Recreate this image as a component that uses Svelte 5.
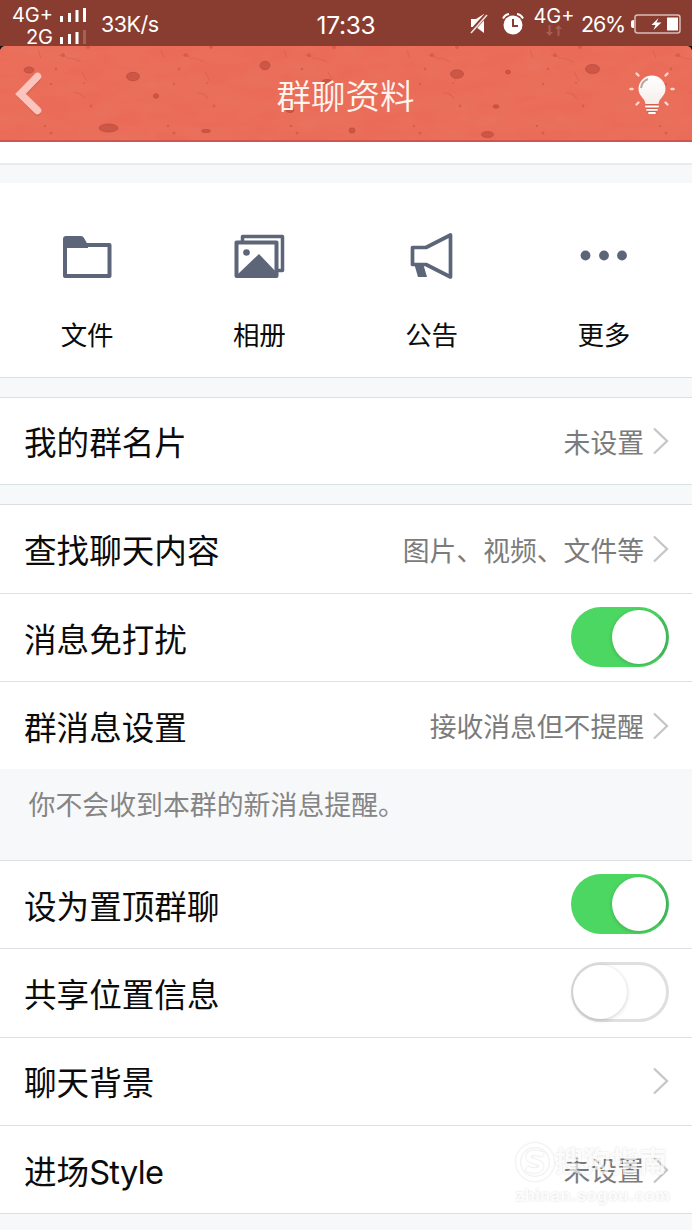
<script>
  const actions = [
    { id: 'files', label: '文件' },
    { id: 'album', label: '相册' },
    { id: 'notice', label: '公告' },
    { id: 'more', label: '更多' }
  ];
  const search = [
    { label: '查找聊天内容', value: '图片、视频、文件等' },
    { label: '消息免打扰', toggle: true, on: true },
    { label: '群消息设置', value: '接收消息但不提醒' }
  ];
  const settings = [
    { label: '设为置顶群聊', toggle: true, on: true },
    { label: '共享位置信息', toggle: true, on: false },
    { label: '聊天背景', value: '' },
    { label: '进场', latin: 'Style', value: '未设置' }
  ];
  // Pits on the header's stone surface: centre x, centre y, radii
  const pits = [
    [29, 24, 5, 3], [133, 30.5, 6.5, 4.2], [156, 50, 2.6, 2.2], [108.5, 82, 9.5, 4],
    [206, 85, 4.500, 1.600], [265, 19.5, 5, 4.2], [327, 36, 5, 2.5], [290, 64, 4, 2.5],
    [352, 84.5, 3, 2.6], [457, 28, 6.5, 4.2], [508, 26, 2.500, 1.800], [496, 60.5, 3, 1.700],
    [487.5, 88.5, 6, 3], [592.5, 23, 7, 4.5]
  ];
</script>

{#snippet chevron()}
  <svg class="chevron" width="18" height="28" viewBox="0 0 18 28"><path d="M2 1.5 15 14 2 26.5" fill="none" stroke="#c6c6ca" stroke-width="2.3" /></svg>
{/snippet}

{#snippet row(item)}
  <div class="row">
    <span class="label">{item.label}{#if item.latin}<span class="latin">{item.latin}</span>{/if}</span>
    {#if item.toggle}
      <span class="switch" class:on={item.on}><i></i></span>
    {:else}
      <span class="value">{item.value}</span>
      {@render chevron()}
    {/if}
  </div>
{/snippet}

<div class="screen">
  <div class="status">
    <div class="left">
      <div class="networks">
        <div class="net"><span>4G+</span><svg width="28" height="16" viewBox="0 0 28 16" fill="#fff"><path d="M1 9h3v6H1zM9 6h3v9H9zM16.500 3h3v12h-3zM24 1h3v14h-3z" /></svg></div>
        <div class="net"><span>2G</span><svg width="28" height="16" viewBox="0 0 28 16" fill="#fff"><path d="M1 8h3v7H1zM9 5h3v10H9zM16.500 3h3v12h-3z" /><path d="M24 1h3v14h-3z" opacity=".2" /></svg></div>
      </div>
      <span class="speed">33K/s</span>
    </div>
    <span class="clock">17:33</span>
    <div class="right">
      <svg class="mute" width="18" height="22" viewBox="0 0 18 22"><path d="M1 6h5l8-5v19l-8-6H1z" fill="#fff" /><path d="M-1 21 17 1" stroke="#893d30" stroke-width="4" /><path d="M1 20 17 2" stroke="#eee0dd" stroke-width="1.6" /></svg>
      <svg class="alarm" width="22" height="22" viewBox="0 0 22 22"><circle cx="11" cy="12" r="9.500" fill="#fff" /><path d="M1 5.500Q3 1.500 7 1M15 1q4 .5 6 4.500" fill="none" stroke="#fff" stroke-width="2" /><path d="M11 6v7h5" fill="none" stroke="#893d30" stroke-width="2" /></svg>
      <div class="data"><span>4G+</span><svg width="16" height="12" viewBox="0 0 16 12" fill="#a35d52"><path d="M2.500 0h2v7H7l-3.500 4L0 7h2.500zM11.500 11h2V4H16l-3.500-4L9 4h2.500z" /></svg></div>
      <span class="percent">26%</span>
      <svg width="51" height="20" viewBox="0 0 51 20"><path d="M4 6Q1 6 1 8v4q0 2 3 2z" fill="#fff" /><rect x="5" y="1" width="45" height="18" rx="2.500" fill="none" stroke="#d7bdb8" stroke-width="1.500" /><path d="m28.500 4-7 7h4l-2 5 8-7.500h-5z" fill="#fff" /><path d="M37 3.500h11v13H37z" fill="#fff" /></svg>
    </div>
  </div>

  <header>
    <svg class="stone" viewBox="0 0 692 96" preserveAspectRatio="none">
      <defs>
        <pattern id="grain" width="123" height="96" patternUnits="userSpaceOnUse">
          <path d="M59 9q5 2 8 1m-1 2q9 0 15 4M74 47q7-1 11 6M82 26l5 9M38 4l3 8" fill="none" stroke="#ce5548" stroke-width="1.200" opacity=".4" />
          <g fill="#c94e42" opacity=".55"><circle cx="63" cy="9" r="2" /><circle cx="56" cy="23" r="1.400" /><circle cx="51" cy="38" r="1.300" /><circle cx="91" cy="60" r="1.400" /><circle cx="45" cy="80" r="1.300" /><circle cx="51" cy="87" r="1.500" /><circle cx="88" cy="1" r="2" /><circle cx="84" cy="37" r="1" /></g>
        </pattern>
        <filter id="rough" x="0" y="0" width="100%" height="100%"><feTurbulence type="fractalNoise" baseFrequency=".025 .06" numOctaves="3" seed="8" /><feColorMatrix values="0 0 0 0 .78 0 0 0 0 .3 0 0 0 0 .22 .25 0 0 0 -.06" /></filter>
      </defs>
      <rect width="692" height="96" fill="#ea6b57" />
      <rect width="692" height="96" filter="url(#rough)" />
      <rect width="692" height="96" fill="url(#grain)" />
      {#each pits as [x, y, rx, ry]}
        <ellipse cx={x} cy={y} {rx} {ry} fill="#c95343" stroke="#b94639" stroke-width=".8" opacity=".85" />
      {/each}
      <path d="M0 95h692" stroke="#cd5650" stroke-width="2" />
      <path d="M0 0h4Q1 1 0 4zM692 0h-4q3 1 4 4z" fill="#16100f" />
    </svg>
    <svg class="back" width="32" height="48" viewBox="0 0 32 48"><path d="M25.500 7 9 24l16.500 17" transform="translate(0 2)" fill="none" stroke="#b65144" stroke-width="6.500" stroke-linecap="round" opacity=".3" /><path d="M25.500 6.500 8.500 24l17 16.500" fill="none" stroke="#fbc4bc" stroke-width="7.500" stroke-linecap="round" stroke-linejoin="miter" /></svg>
    <h1>群聊资料</h1>
    <svg class="bulb" width="48" height="48" viewBox="0 0 48 48"><defs><linearGradient id="glass" x2="0" y2="1"><stop stop-color="#fff" /><stop offset="1" stop-color="#f5eeeb" /></linearGradient></defs><path d="M19 34h12v4l-2 6H21l-2-6z" fill="#b64f43" opacity=".5" /><path d="M25 5.500c-7.500 0-13.500 6-13.500 13.500 0 7 6.500 9 7 15h13c.5-6 7-8 7-15 0-7.500-6-13.500-13.500-13.500z" fill="url(#glass)" /><path d="M14 18q1-7 7-9" fill="none" stroke="#bda6a0" stroke-width="2" /><path d="M19 36.500h12M20 39.800h10M22 43h6" stroke="#fff" stroke-width="1.800" stroke-linecap="round" /><path d="m9.500 3.500 2 2M40.500 3.500l-2 2M3.500 19h2M44.500 19h2M9.500 34.500l2-2M40.500 34.500l-2-2" stroke="#ffd9d0" stroke-width="2.400" stroke-linecap="round" /></svg>
  </header>

  <div class="tail"></div>
  <div class="gap first"></div>

  <nav>
    {#each actions as a}
      <div class="action">
        <svg width="56" height="56" viewBox="0 0 56 56" fill="none" stroke="#5d6579" stroke-width="4" stroke-linejoin="round">
          {#if a.id === 'files'}
            <path d="M6 15h44.500v31H6z" /><path d="M4 18v-9q0-3 3-3h15q2 0 3 2l4 7v3z" fill="#5d6579" stroke="none" />
          {:else if a.id === 'album'}
            <path d="M11.500 11V6.500h40v34h-5" stroke-width="3.500" /><path d="M5.500 12.500h40v33.500h-40z" /><path d="M7 44 28 24l19 20z" fill="#5d6579" stroke="none" /><circle cx="15.500" cy="22.500" r="3.300" fill="#5d6579" stroke="none" />
          {:else if a.id === 'notice'}
            <path d="M8.500 17.500H22L46.500 5v42L22 34.500H8.500z" stroke-width="3.700" /><path d="M10.500 35h9l3.500 12h-9z" fill="#5d6579" stroke="none" />
          {:else}
            <g fill="#5d6579" stroke="none"><circle cx="9.500" cy="25.500" r="4.900" /><circle cx="28" cy="25.500" r="4.900" /><circle cx="46" cy="25.500" r="4.900" /></g>
          {/if}
        </svg>
        <span>{a.label}</span>
      </div>
    {/each}
  </nav>
  <div class="gap"></div>
  <section class="card">{@render row({ label: '我的群名片', value: '未设置' })}</section>
  <div class="gap second"></div>
  <section class="search">{#each search as item}{@render row(item)}{/each}</section>
  <p class="hint">你不会收到本群的新消息提醒。</p>
  <section class="settings">{#each settings as item}{@render row(item)}{/each}</section>
  <div class="rest"></div>

  <div class="watermark">
    <svg width="40" height="40" viewBox="0 0 40 40"><circle cx="20" cy="20" r="17" fill="none" stroke="#fff" stroke-width="4" /><path d="M28 12.500q-8-3-12.500-1-4.500 4 .5 6.500l8 3q4.500 3 0 6.500-5 2.500-12.500-1" fill="none" stroke="#fff" stroke-width="4.500" /></svg>
    <b>搜狗指南</b>
    <small>zhinan.sogou.com</small>
  </div>
</div>

<style>
  :global(body) { margin: 0; background: #f7f8fa; overflow: hidden; }
  .screen { position: relative; display: flex; flex-direction: column; width: 692px; height: 1230px; overflow: hidden; background: #f7f8fa; color: #0b0b0b; font-family: Inter, "Noto Sans CJK SC", sans-serif; }
  .screen * { box-sizing: border-box; }
  svg { display: block; flex: none; }
  .status { flex: none; display: grid; grid-template-columns: 1fr 64px 1fr; height: 46px; background: #893d30; color: #fff; align-items: center; padding: 0 11px; white-space: nowrap; }
  .left { display: flex; align-items: center; }
  .networks { display: flex; flex-direction: column; width: 76px; padding-top: 4px; }
  .net { display: flex; justify-content: flex-end; gap: 6px; height: 22px; align-items: center; font-size: 20px; line-height: 22px; }
  .speed { padding-left: 14px; font-size: 21.500px; letter-spacing: -.5px; }
  .clock { font-size: 24.500px; padding-top: 2px; text-align: center; letter-spacing: -.3px; }
  .right { display: flex; justify-content: flex-end; align-items: center; }
  .mute { margin-right: 14px; }
  .alarm { margin-right: 9px; }
  .data { display: flex; flex-direction: column; align-items: center; width: 42px; margin-right: 6px; height: 38px; font-size: 20px; line-height: 22px; }
  .data svg { margin-top: -2px; }
  .percent { width: 43px; font-size: 21.500px; margin-right: 6px; letter-spacing: -1.200px; }
  header { position: relative; flex: none; height: 96px; display: flex; align-items: center; justify-content: space-between; padding: 0 17px 0 12px; }
  .stone { position: absolute; inset: 0; width: 100%; height: 100%; }
  .back, h1, .bulb { position: relative; }
  h1 { margin: 5px 0 0 20px; color: #fff5ee; font-size: 34.500px; line-height: 48px; font-weight: 350; }
  .tail { flex: none; height: 21px; background: #fff; }
  .gap { flex: none; height: 21px; border-top: 1px solid #d6e2e4; border-bottom: 1px solid #dcdfe2; background: #f7f8fa; }
  .first { height: 20px; border-top: 2px solid #e9ebee; border-bottom: 0; }
  nav { flex: none; display: flex; height: 194px; background: #fff; padding: 47px 2px 0 1px; }
  .action { flex: 1; display: flex; flex-direction: column; align-items: center; gap: 29px; font-size: 26.500px; line-height: 40px; }
  .row { display: flex; align-items: center; height: 88px; padding: 0 23px 0 24px; }
  .label { flex: 1; font-size: 32.600px; line-height: 48px; padding-top: 4px; }
  .latin { letter-spacing: -.7px; }
  .value { font-size: 26.800px; line-height: 40px; color: #7b7b7b; padding-top: 3px; }
  .chevron { margin-left: 8px; margin-right: -1px; }
  section { flex: none; background: #fff; }
  .card .row { height: 86px; }
  .search .row + .row, .settings .row + .row { border-top: 1px solid #dfe0e5; }
  .hint { flex: none; height: 92px; margin: 0; padding: 14px 28.500px 0; border-bottom: 1px solid #dedfe3; color: #858585; font-size: 26.900px; line-height: 44px; }
  .settings .row { height: 87px; }
  .settings .row + .row { height: 88.500px; }
  .settings .row:last-child { height: 88px; }
  .rest { flex: 1; border-top: 1px solid #dcdfe2; }
  .switch { display: flex; width: 98px; height: 60px; margin-top: -1px; padding: 0; border-radius: 30px; border: 3px solid #dfdfdf; background: #fff; }
  .switch i { width: 54px; height: 54px; border-radius: 50%; background: #fff; box-shadow: 0 1px 4px #0003; }
  .switch:not(.on) i { margin-left: -1px; }
  .switch.on { border-color: #4cd762; border-right-color: #45c160; background: #4cd762; justify-content: flex-end; }
  .watermark { position: absolute; left: 515px; top: 1142px; width: 160px; height: 66px; display: grid; grid-template-columns: 40px 1fr; color: #ffffffd8; opacity: .8; filter: drop-shadow(0 0 1px #0003); }
  .watermark b { font-size: 28px; line-height: 40px; white-space: nowrap; }
  .watermark small { grid-column: span 2; font-size: 16px; line-height: 23px; letter-spacing: .6px; font-weight: 700; }
</style>
